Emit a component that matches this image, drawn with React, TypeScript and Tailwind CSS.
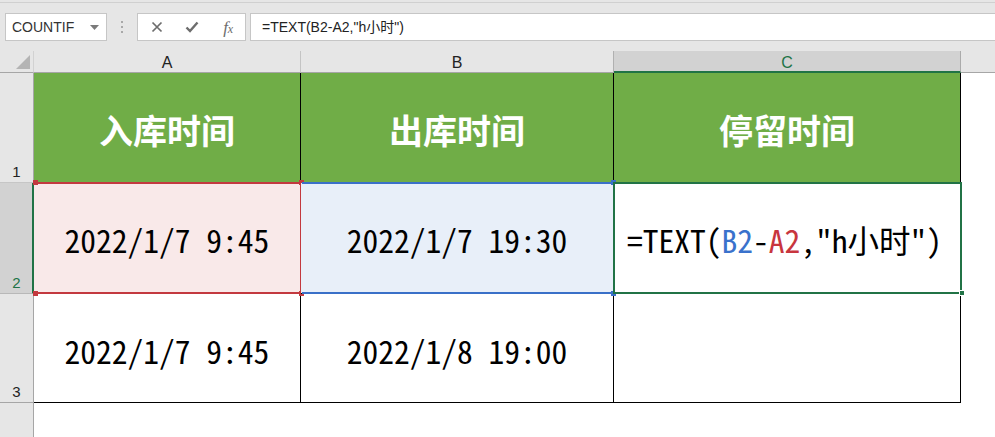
import React from "react";

const dataFont =
  "font-['Noto_Sans_Mono_CJK_SC','DejaVu_Sans_Mono',monospace] text-[31.5px] leading-none text-black";

function Toolbar() {
  return (
    <div className="h-[51px] pt-[2px]">
      <div className="border-t border-t-[#d0d0d0] pt-[10px] pl-[5px] flex items-start">
        <div className="w-[102px] h-[28px] bg-white border border-[#c6c6c6] flex items-center justify-between pl-[6px] pr-[6px]">
          <span className="text-[14px] text-[#333] leading-none">COUNTIF</span>
          <svg width="9" height="5" viewBox="0 0 9 5" className="mr-[1px]">
            <polygon points="0,0 9,0 4.5,5" fill="#7a7a7a" />
          </svg>
        </div>
        <div className="w-[30px] h-[28px] flex flex-col items-center justify-center gap-[3px]">
          <div className="w-[2px] h-[2px] bg-[#a8a8a8]" />
          <div className="w-[2px] h-[2px] bg-[#a8a8a8]" />
          <div className="w-[2px] h-[2px] bg-[#a8a8a8]" />
        </div>
        <div className="w-[109px] h-[28px] bg-white border border-[#c6c6c6] grid grid-cols-3 items-center justify-items-center">
          <svg width="12" height="12" viewBox="0 0 12 12" className="ml-[2px]">
            <path d="M1.5 1.5 L10.5 10.5 M10.5 1.5 L1.5 10.5" stroke="#6d6d6d" strokeWidth="1.7" fill="none" />
          </svg>
          <svg width="14" height="12" viewBox="0 0 14 12" className="ml-[2px]">
            <path d="M1.5 6.5 L5 10 L12.5 1.5" stroke="#6d6d6d" strokeWidth="2.4" fill="none" />
          </svg>
          <span className="font-['Liberation_Serif',serif] italic text-[#6d6d6d] text-[17px] leading-none ml-[2px]">
            f<span className="text-[12px]">x</span>
          </span>
        </div>
        <div className="ml-[4px] flex-1 h-[28px] bg-white border border-r-0 border-[#c6c6c6] flex items-center pl-[11px]">
          <span className="text-[14px] text-[#222] leading-none font-['Liberation_Sans','Noto_Sans_CJK_SC',sans-serif]">
            =TEXT(B2-A2,"h小时")
          </span>
        </div>
      </div>
    </div>
  );
}

function Handle({ className }: { className: string }) {
  return <div className={"absolute w-[5px] h-[5px] " + className} />;
}

export default function App() {
  return (
    <div className="w-[995px] h-[437px] overflow-hidden bg-[#e6e6e6] font-['Liberation_Sans','Noto_Sans_CJK_SC',sans-serif]">
      <Toolbar />
      <div className="grid grid-cols-[34px_267px_313px_347px_1fr] grid-rows-[22px_110px_111px_109px_34px]">
        {/* column header row */}
        <div className="relative border-r border-r-[#d2d2d2] border-b border-b-[#a6a6a6]">
          <svg width="14" height="14" viewBox="0 0 14 14" className="absolute left-[16px] top-[4px]">
            <polygon points="14,0 14,14 0,14" fill="#b4b4b4" />
          </svg>
        </div>
        <div className="border-r border-r-[#c4c4c4] border-b border-b-[#a6a6a6] flex items-center justify-center pt-[2px] text-[16px] text-[#222] leading-none">
          A
        </div>
        <div className="border-r border-r-[#b0b0b0] border-b border-b-[#a6a6a6] flex items-center justify-center pt-[2px] text-[16px] text-[#222] leading-none">
          B
        </div>
        <div className="bg-[#d2d2d2] border-r border-r-[#ababab] border-b-2 border-b-[#217346] flex items-center justify-center pt-[3px] text-[16px] text-[#217346] leading-none">
          C
        </div>
        <div className="border-b border-b-[#a6a6a6]" />

        {/* row 1 */}
        <div className="border-r border-r-[#a6a6a6] border-b border-b-[#c6c6c6] flex items-end justify-center pb-[3px] text-[15px] text-[#222] leading-none">
          1
        </div>
        <div className="bg-[#70ad47] border-r border-b border-black flex items-center justify-center pt-[4px] text-white font-bold text-[34px] leading-none font-['Noto_Sans_CJK_SC',sans-serif]">
          入库时间
        </div>
        <div className="bg-[#70ad47] border-r border-b border-black flex items-center justify-center pt-[4px] text-white font-bold text-[34px] leading-none font-['Noto_Sans_CJK_SC',sans-serif]">
          出库时间
        </div>
        <div className="bg-[#70ad47] border-r border-b border-black flex items-center justify-center pt-[4px] text-white font-bold text-[34px] leading-none font-['Noto_Sans_CJK_SC',sans-serif]">
          停留时间
        </div>
        <div className="bg-white" />

        {/* row 2 */}
        <div className="bg-[#d2d2d2] border-r-2 border-r-[#217346] border-b border-b-[#b8b8b8] flex items-end justify-center pb-[3px] pl-[1px] text-[15px] text-[#217346] leading-none">
          2
        </div>
        <div className={"relative bg-[#f9e9e9] border-r border-b border-black flex items-center justify-center pt-[4px] " + dataFont}>
          2022/1/7 9:45
          <div className="absolute -top-[1px] -bottom-[1px] left-0 -right-[2px] border-t-2 border-b-2 border-r-2 border-[#c3393f]" />
          <Handle className="bg-[#c3393f] -top-[3px] -left-[1px]" />
          <Handle className="bg-[#c3393f] -top-[3px] -right-[4px]" />
          <Handle className="bg-[#c3393f] -bottom-[3px] -left-[1px]" />
          <Handle className="bg-[#c3393f] -bottom-[3px] -right-[4px]" />
        </div>
        <div className={"relative bg-[#e8eff9] border-r border-b border-black flex items-center justify-center pt-[4px] " + dataFont}>
          2022/1/7 19:30
          <div className="absolute -top-[1px] -bottom-[1px] left-[1px] right-0 border-t-2 border-b-2 border-[#3a70c8]" />
          <Handle className="bg-[#3a70c8] -top-[3px] -right-[3px]" />
          <Handle className="bg-[#3a70c8] -bottom-[3px] -right-[3px]" />
        </div>
        <div className={"relative bg-white border-r border-b border-black flex items-center pl-[13px] pt-[4px] " + dataFont}>
          <span>
            =TEXT(<span className="text-[#3a72cc]">B2</span>-<span className="text-[#c8363e]">A2</span>,"h小时")
          </span>
          <div className="absolute -top-[1px] -bottom-[1px] -left-[1px] -right-[2px] border-2 border-[#217346]" />
          <div className="absolute w-[6px] h-[6px] bg-[#217346] border border-white -bottom-[3px] -right-[5px]" />
        </div>
        <div className="bg-white" />

        {/* row 3 */}
        <div className="border-r border-r-[#a6a6a6] border-b border-b-[#a6a6a6] flex items-end justify-center pb-[3px] text-[15px] text-[#222] leading-none">
          3
        </div>
        <div className={"bg-white border-r border-b border-black flex items-center justify-center pt-[6px] " + dataFont}>
          2022/1/7 9:45
        </div>
        <div className={"bg-white border-r border-b border-black flex items-center justify-center pt-[6px] " + dataFont}>
          2022/1/8 19:00
        </div>
        <div className="bg-white border-r border-b border-black" />
        <div className="bg-white" />

        {/* row 4 (empty) */}
        <div className="border-r border-r-[#a6a6a6]" />
        <div className="col-span-4 bg-white" />
      </div>
    </div>
  );
}
